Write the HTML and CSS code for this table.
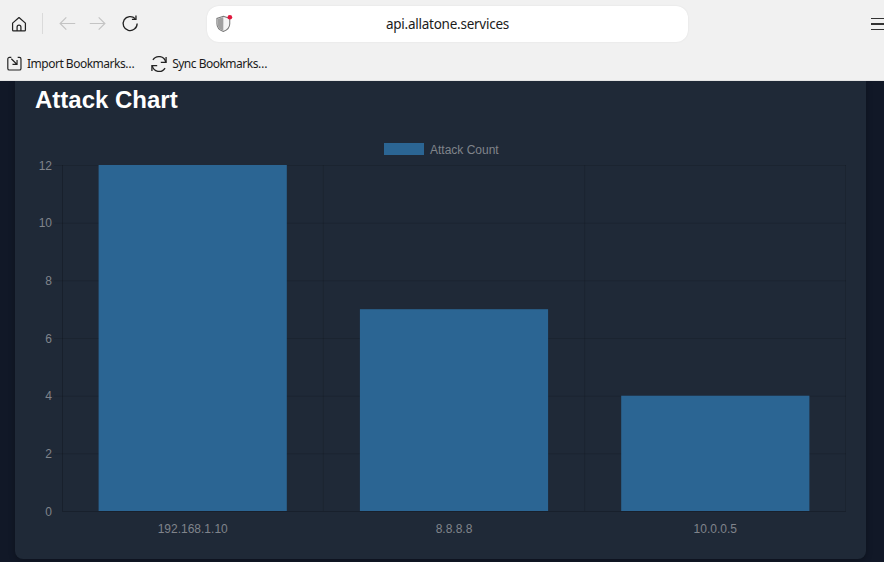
FILE: index.html
```html
<!DOCTYPE html>
<html lang="en">
<head>
<meta charset="utf-8">
<title>Attack Chart</title>
<link rel="stylesheet" href="styles.css">
</head>
<body>
<div class="browser">
  <header class="toolbar">
    <button class="tb-btn home" aria-label="Home">
      <svg viewBox="0 0 16 16" width="18" height="18"><path d="M2.3 7.2 L8 2.3 L13.7 7.2 V13.4 a0.8 0.8 0 0 1 -0.8 0.8 H3.1 a0.8 0.8 0 0 1 -0.8 -0.8 Z" fill="none" stroke="#222" stroke-width="1.1" stroke-linejoin="round"/><path d="M6.3 14.2 V10.6 a1.7 1.7 0 0 1 3.4 0 V14.2" fill="none" stroke="#222" stroke-width="1.1"/></svg>
    </button>
    <span class="sep"></span>
    <button class="tb-btn back" aria-label="Back">
      <svg viewBox="0 0 16 16" width="19" height="19"><path d="M14.5 8 H1.8 M7 2.8 L1.8 8 L7 13.2" fill="none" stroke="#c4c4c4" stroke-width="1"/></svg>
    </button>
    <button class="tb-btn fwd" aria-label="Forward">
      <svg viewBox="0 0 16 16" width="19" height="19"><path d="M1.5 8 H14.2 M9 2.8 L14.2 8 L9 13.2" fill="none" stroke="#c4c4c4" stroke-width="1"/></svg>
    </button>
    <button class="tb-btn reload" aria-label="Reload">
      <svg viewBox="0 0 16 16" width="19" height="19"><path d="M13.6 8 A5.9 5.9 0 1 1 12 4" fill="none" stroke="#222" stroke-width="1.1"/><path d="M12.6 1.2 V4.6 H9.2" fill="none" stroke="#222" stroke-width="1.1"/></svg>
    </button>
    <div class="urlbar">
      <span class="shield">
        <svg viewBox="0 0 18 18" width="21" height="21"><path d="M8 2 L13.5 3.8 V8.3 C13.5 11.6 11.2 13.8 8 15 C4.8 13.8 2.5 11.6 2.5 8.3 V3.8 Z" fill="#f4f4f4" stroke="#7a7a7a" stroke-width="0.9"/><path d="M8 2.6 V14.4 C5.2 13.3 3.1 11.3 3.1 8.3 V4.2 Z" fill="#a0a0a0"/><circle cx="13.6" cy="2.8" r="2" fill="#e0173d"/></svg>
      </span>
      <span class="url">api.allatone.services</span>
    </div>
    <span class="menu" aria-label="Menu"><i></i><i></i><i></i></span>
  </header>
  <nav class="bookmarks">
    <a class="bm import">
      <svg viewBox="0 0 16 16" width="17" height="17"><path d="M5 2.2 H3.2 a1.5 1.5 0 0 0 -1.5 1.5 V12.6 a1.5 1.5 0 0 0 1.5 1.5 H12.6 a1.5 1.5 0 0 0 1.5 -1.5 V3.7 a1.5 1.5 0 0 0 -1.5 -1.5 H11" fill="none" stroke="#222" stroke-width="1.1"/><path d="M5 3.5 L10.2 8.7 M10.4 4.6 V8.9 H6.1" fill="none" stroke="#222" stroke-width="1.1"/></svg>
      <span>Import Bookmarks…</span>
    </a>
    <a class="bm sync">
      <svg viewBox="0 0 16 16" width="18" height="18"><path d="M14 6.5 A6.2 6.2 0 0 0 2.6 4.4" fill="none" stroke="#222" stroke-width="1.15"/><path d="M14.3 1.8 V6.6 H9.6" fill="none" stroke="#222" stroke-width="1.15"/><path d="M2 9.5 A6.2 6.2 0 0 0 13.4 11.6" fill="none" stroke="#222" stroke-width="1.15"/><path d="M1.7 14.2 V9.4 H6.4" fill="none" stroke="#222" stroke-width="1.15"/></svg>
      <span>Sync Bookmarks…</span>
    </a>
  </nav>
  <main class="viewport">
    <section class="card">
      <h2 class="card-title">Attack Chart</h2>
      <div class="chart">
        <svg class="chart-svg" viewBox="0 0 811 424" width="811" height="424">
          <g class="legend">
            <rect x="349" y="29" width="40" height="12" class="bar"/>
            <text x="395" y="39.5" class="lbl">Attack Count</text>
          </g>
          <g class="grid">
            <line x1="19" y1="51.5" x2="811" y2="51.5"/>
            <line x1="19" y1="109.2" x2="811" y2="109.2"/>
            <line x1="19" y1="166.8" x2="811" y2="166.8"/>
            <line x1="19" y1="224.5" x2="811" y2="224.5"/>
            <line x1="19" y1="282.2" x2="811" y2="282.2"/>
            <line x1="19" y1="339.8" x2="811" y2="339.8"/>
            <line x1="288.3" y1="51" x2="288.3" y2="397"/>
            <line x1="549.7" y1="51" x2="549.7" y2="397"/>
            <line x1="810.5" y1="51" x2="810.5" y2="397"/>
          </g>
          <g class="axis">
            <line x1="27.5" y1="51" x2="27.5" y2="397"/>
            <line x1="27" y1="397.5" x2="811" y2="397.5"/>
          </g>
          <g class="bars">
            <rect x="63.6" y="51" width="188.2" height="346" class="bar"/>
            <rect x="324.9" y="195.2" width="188.2" height="201.8" class="bar"/>
            <rect x="586.2" y="281.7" width="188.2" height="115.3" class="bar"/>
          </g>
          <g class="yticks">
            <text x="17" y="55.5">12</text>
            <text x="17" y="113.2">10</text>
            <text x="17" y="170.8">8</text>
            <text x="17" y="228.5">6</text>
            <text x="17" y="286.2">4</text>
            <text x="17" y="343.8">2</text>
            <text x="17" y="401.5">0</text>
          </g>
          <g class="xticks">
            <text x="157.7" y="419">192.168.1.10</text>
            <text x="419" y="419">8.8.8.8</text>
            <text x="680.3" y="419">10.0.0.5</text>
          </g>
        </svg>
      </div>
    </section>
  </main>
</div>
</body>
</html>
```

FILE: styles.css
```css
* { box-sizing: border-box; }
html, body { margin: 0; padding: 0; }
body {
  width: 884px;
  height: 562px;
  overflow: hidden;
  background: #111827;
  font-family: "Noto Sans", "Open Sans", sans-serif;
}
.browser { display: flex; flex-direction: column; height: 562px; }

.toolbar {
  height: 47px;
  background: #f1f1f1;
  display: flex;
  align-items: center;
  padding-left: 4px;
  flex: none;
  overflow: hidden;
}
.toolbar > * { flex: none; }
.tb-btn {
  width: 30px;
  height: 30px;
  padding: 0;
  border: 0;
  background: transparent;
  display: flex;
  align-items: center;
  justify-content: center;
}
.tb-btn svg { display: block; }
.home { margin-top: 1px; }
.sep { width: 1px; height: 21px; background: #dadada; margin: 0 9px 0 8px; }
.reload { margin-left: 3px; }
.urlbar {
  margin-left: 62px;
  width: 481px;
  height: 36px;
  background: #ffffff;
  border-radius: 12px;
  box-shadow: 0 0 2px rgba(0,0,0,0.08);
  display: grid;
  grid-template-columns: 1fr auto 1fr;
  align-items: center;
}
.shield { padding-left: 7px; display: flex; align-items: center; margin-top: 1px; }
.url { font-size: 13.5px; color: #1b1b1b; letter-spacing: -0.25px; margin-top: 1px; }
.menu {
  margin-left: 183px;
  width: 16px;
  display: flex;
  flex-direction: column;
  gap: 4px;
  margin-top: 1px;
}
.menu i { display: block; height: 1.5px; background: #333; }

.bookmarks {
  height: 34px;
  background: #f1f1f1;
  border-bottom: 1px solid #e4e4e4;
  display: flex;
  align-items: center;
  padding-left: 6px;
  flex: none;
}
.bm {
  display: flex;
  align-items: center;
  gap: 4px;
  font-size: 12px;
  color: #1b1b1b;
  letter-spacing: -0.5px;
}
.bm svg { display: block; }
.sync { margin-left: 16px; }

.viewport {
  flex: 1;
  background: #111827;
  padding: 0 18px 0 15px;
  overflow: hidden;
}
.card {
  background: #1f2937;
  border-radius: 0 0 8px 8px;
  padding: 5px 20px 21px;
  box-shadow: 0 2px 6px rgba(0,0,0,0.25);
}
.card-title {
  margin: 0;
  font-family: "Liberation Sans", Arial, sans-serif;
  font-size: 24px;
  line-height: 28px;
  font-weight: bold;
  color: #ffffff;
}
.chart { height: 424px; }
.chart-svg { display: block; font-family: "Liberation Sans", Arial, sans-serif; font-size: 12px; }
.chart-svg .bar { fill: #2b6593; }
.chart-svg .grid line { stroke: rgba(0,0,0,0.12); stroke-width: 1; }
.chart-svg .axis line { stroke: rgba(0,0,0,0.2); stroke-width: 1; }
.chart-svg text { fill: #80848b; }
.chart-svg .lbl { fill: #80848b; }
.chart-svg .yticks text { text-anchor: end; }
.chart-svg .xticks text { text-anchor: middle; }
```
